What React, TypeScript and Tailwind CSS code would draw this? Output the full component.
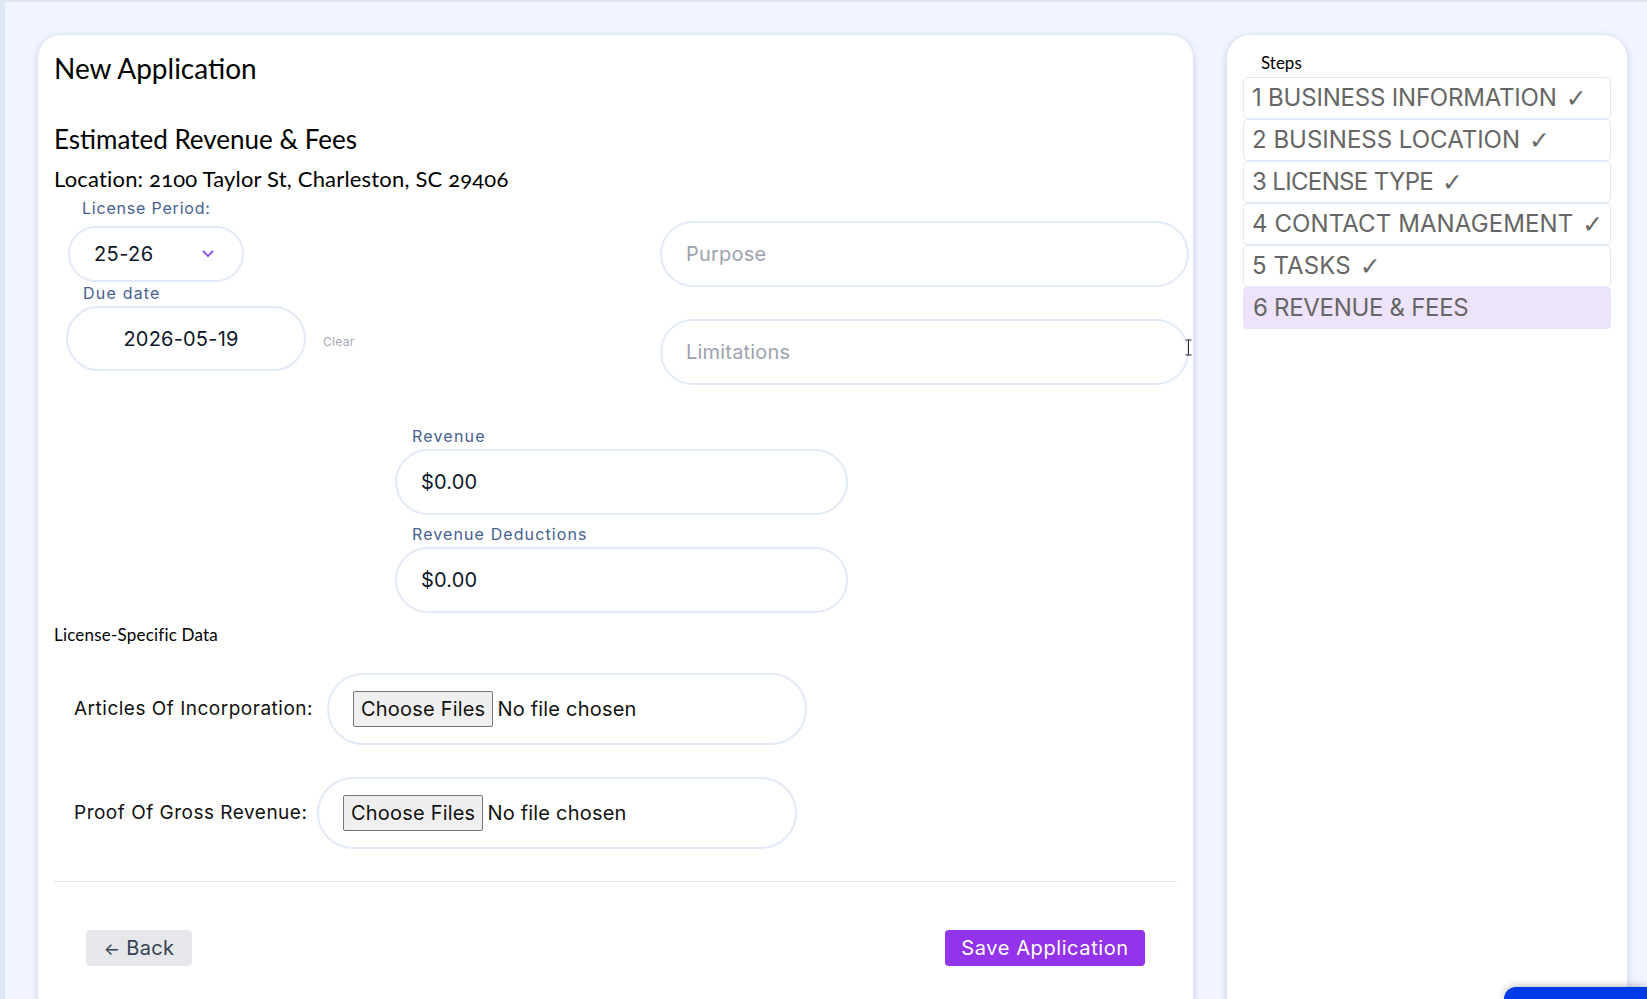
import React from 'react';

const poppins = "font-['Inter','Liberation_Sans',sans-serif]";
const alegreya = "font-['Lato','Noto_Sans',sans-serif]";

const steps = [
  { label: '1 BUSINESS INFORMATION', spacing: 'tracking-[-0.2px]' },
  { label: '2 BUSINESS LOCATION', spacing: 'tracking-[0px]' },
  { label: '3 LICENSE TYPE', spacing: 'tracking-[-0.65px]' },
  { label: '4 CONTACT MANAGEMENT', spacing: 'tracking-[0.1px]' },
  { label: '5 TASKS', spacing: 'tracking-[0.1px]' },
];

const pill =
  'rounded-full border-2 border-[#e2e9f7] bg-white px-[24px] text-[20px] tracking-[0.2px] text-[#0f172a] placeholder:text-[#9ca3af] outline-none ' + poppins;

const fileInput =
  'w-full text-[20px] tracking-[0.2px] text-[#111] file:h-[36px] file:px-[7px] file:mr-[4px] file:rounded-[2px] file:border file:border-[#767676] file:bg-[#efefef] file:text-[#111] ' + poppins;

function FieldLabel({ children, className }: { children: React.ReactNode; className: string }) {
  return (
    <div className={`flex h-[20px] items-center text-[16px] text-[#46608f] ${poppins} ${className}`}>
      {children}
    </div>
  );
}

export default function App() {
  return (
    <div className="relative h-[999px] overflow-hidden border-t-2 border-l-[5px] border-[#e0e5f6] bg-[#f0f5ff]">
      <div className="flex items-start gap-[32px] pt-[32px] pl-[32px]">
        {/* Main form */}
        <main className="h-[1000px] w-[1157px] shrink-0 rounded-[24px] border border-[#dfe6f2] bg-white pt-[16px] pl-[16px] pr-[16px] shadow-[0_2px_6px_rgba(100,116,160,0.25)]">
          <h1 className={`flex h-[34px] items-center text-[28px] text-black ${alegreya}`}>New Application</h1>
          <h2 className={`mt-[37px] flex h-[34px] items-center text-[26px] text-black ${alegreya}`}>Estimated Revenue &amp; Fees</h2>
          <p className={`mt-[6px] flex h-[32px] items-center text-[22px] tracking-[0.18px] text-black oldstyle-nums ${alegreya}`}>
            Location: 2100 Taylor St, Charleston, SC 29406
          </p>

          <div className="flex items-start">
            <div className="w-[606px] shrink-0">
              <FieldLabel className="mt-[4px] pl-[28px] tracking-[0.8px]">License Period:</FieldLabel>
              <div className="relative ml-[14px] mt-[8px] w-[176px]">
                <select
                  defaultValue="25-26"
                  className={`h-[56px] w-full appearance-none rounded-full border-2 border-[#e2e9f7] bg-white pl-[24px] text-[20px] tracking-[0.4px] text-[#0f172a] outline-none ${poppins}`}
                >
                  <option>25-26</option>
                </select>
                <svg className="absolute right-[29px] top-[23px] h-[10px] w-[14px]" viewBox="0 0 14 10" fill="none" stroke="#8b5cf6" strokeWidth="2">
                  <path d="M2 2l5 5 5-5" />
                </svg>
              </div>
              <FieldLabel className="mt-[1px] pl-[29px] tracking-[1.2px]">Due date</FieldLabel>
              <div className="mt-[3px] flex items-center">
                <input readOnly value="2026-05-19" className={`${pill} ml-[12px] h-[65px] w-[240px] pr-[34px] text-center`} />
                <span className={`ml-[17px] mt-[7px] text-[12px] tracking-[0.3px] text-[#a3aab8] ${poppins}`}>Clear</span>
              </div>
            </div>
            <div className="relative w-[529px] shrink-0 pt-[27px]">
              <input placeholder="Purpose" className={`${pill} block h-[66px] w-full`} />
              <input placeholder="Limitations" className={`${pill} mt-[32px] block h-[66px] w-full`} />
              <svg className="absolute right-[-4px] top-[145px] h-[17px] w-[9px]" viewBox="0 0 9 17" fill="none" stroke="#222" strokeWidth="1">
                <path d="M1.5 1h6M4.500 1v15M1.500 16h6" />
              </svg>
            </div>
          </div>

          <div className="ml-[341px] mt-[41px] w-[453px]">
            <FieldLabel className="pl-[17px] tracking-[1.2px]">Revenue</FieldLabel>
            <input readOnly value="$0.00" className={`${pill} mt-[3px] block h-[66px] w-full`} />
            <FieldLabel className="mt-[9px] pl-[17px] tracking-[1.1px]">Revenue Deductions</FieldLabel>
            <input readOnly value="$0.00" className={`${pill} mt-[3px] block h-[66px] w-full`} />
          </div>

          <h3 className={`mt-[12px] flex h-[20px] items-center text-[17px] tracking-[0.2px] text-black ${alegreya}`}>License-Specific Data</h3>

          <div className="ml-[20px] mt-[28px] flex items-center gap-[13px]">
            <label className={`w-[240px] whitespace-nowrap text-[19px] tracking-[0.5px] text-[#111] ${poppins}`}>Articles Of Incorporation:</label>
            <div className="flex h-[72px] w-[480px] items-center rounded-full border-2 border-[#e2e9f7] pl-[24px]">
              <input type="file" multiple className={fileInput} />
            </div>
          </div>
          <div className="ml-[20px] mt-[32px] flex items-center gap-[13px]">
            <label className={`w-[230px] whitespace-nowrap text-[19px] tracking-[0.5px] text-[#111] ${poppins}`}>Proof Of Gross Revenue:</label>
            <div className="flex h-[72px] w-[480px] items-center rounded-full border-2 border-[#e2e9f7] pl-[24px]">
              <input type="file" multiple className={fileInput} />
            </div>
          </div>

          <hr className="mt-[32px] border-[#e5e7eb]" />

          <div className="mt-[48px] flex items-center justify-between px-[32px]">
            <button className={`h-[36px] w-[106px] rounded-[4px] bg-[#e5e7eb] text-[20px] tracking-[0.3px] text-[#374151] ${poppins}`}>
              <span className="text-[17px]">←</span> Back
            </button>
            <button className={`h-[36px] w-[200px] rounded-[4px] bg-[#9333ea] text-[20px] tracking-[0.6px] text-white ${poppins}`}>Save Application</button>
          </div>
        </main>

        {/* Steps panel */}
        <aside className="h-[1000px] w-[402px] shrink-0 rounded-[24px] border border-[#dfe6f2] bg-white px-[16px] pt-[14px] shadow-[0_2px_6px_rgba(100,116,160,0.25)]">
          <div className={`ml-[18px] flex h-[28px] items-center text-[17px] text-black ${alegreya}`}>Steps</div>
          <ul className="flex flex-col">
            {steps.map((s) => (
              <li
                key={s.label}
                className={`flex h-[42px] items-center rounded-[4px] border border-[#e2e9f7] pl-[8px] text-[24px] text-[#666] ${s.spacing} ${poppins}`}
              >
                {s.label}
                <span className="ml-[9px] font-['DejaVu_Sans',sans-serif] text-[25px] leading-none">✓</span>
              </li>
            ))}
            <li className={`flex h-[42px] items-center rounded-[4px] bg-[#ede4fc] pl-[10px] text-[24px] tracking-[-0.3px] text-[#666] ${poppins}`}>6 REVENUE &amp; FEES</li>
          </ul>
        </aside>
      </div>

      {/* chat widget peeking in at the corner */}
      <div className="absolute bottom-0 right-0 h-[12px] w-[143px] rounded-tl-[12px] bg-[#0039e6] shadow-[0_0_8px_rgba(0,0,0,0.35)]" />
    </div>
  );
}
